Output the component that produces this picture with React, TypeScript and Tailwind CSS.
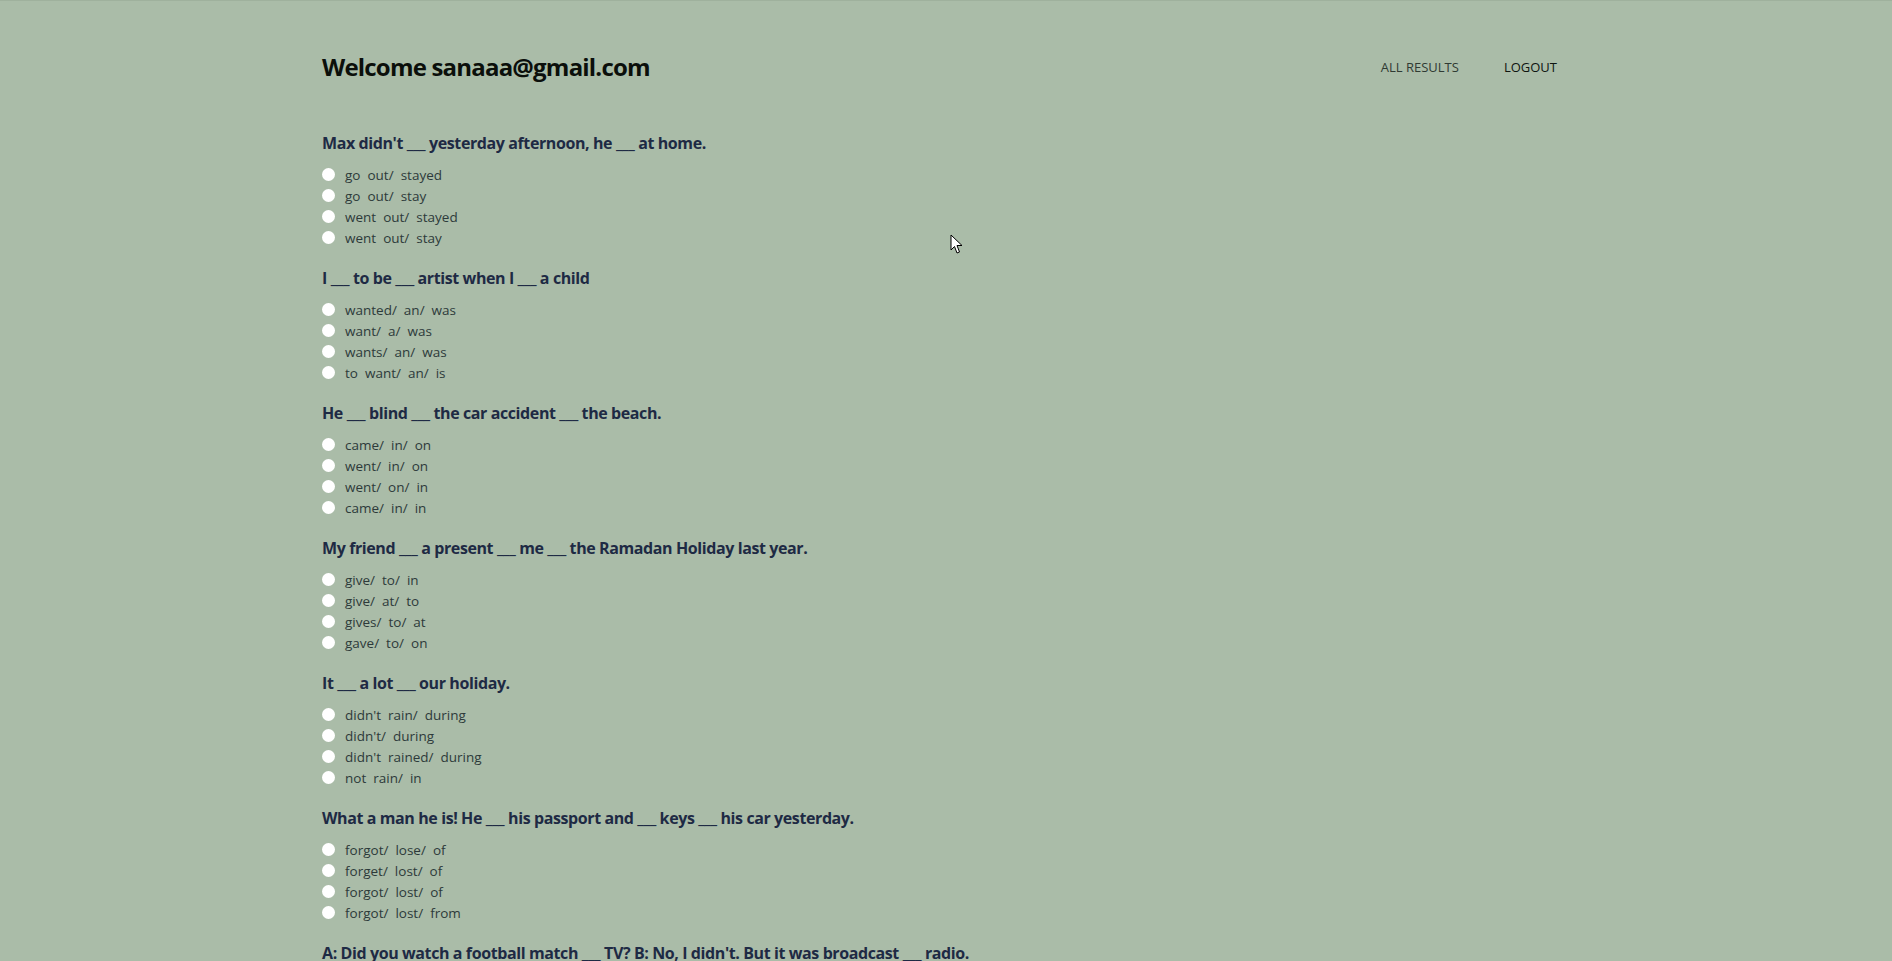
import React from "react";

const questions = [
    {
        title: "Max didn't ___ yesterday afternoon, he ___ at home.",
        options: ["go  out/  stayed", "go  out/  stay", "went  out/  stayed", "went  out/  stay"],
    },
    {
        title: "I ___ to be ___ artist when I ___ a child",
        options: ["wanted/  an/  was", "want/  a/  was", "wants/  an/  was", "to  want/  an/  is"],
    },
    {
        title: "He ___ blind ___ the car accident ___ the beach.",
        options: ["came/  in/  on", "went/  in/  on", "went/  on/  in", "came/  in/  in"],
    },
    {
        title: "My friend ___ a present ___ me ___ the Ramadan Holiday last year.",
        options: ["give/  to/  in", "give/  at/  to", "gives/  to/  at", "gave/  to/  on"],
    },
    {
        title: "It ___ a lot ___ our holiday.",
        options: ["didn't  rain/  during", "didn't/  during", "didn't  rained/  during", "not  rain/  in"],
    },
    {
        title: "What a man he is! He ___ his passport and ___ keys ___ his car yesterday.",
        options: ["forgot/  lose/  of", "forget/  lost/  of", "forgot/  lost/  of", "forgot/  lost/  from"],
    },
    {
        title: "A: Did you watch a football match ___ TV? B: No, I didn't. But it was broadcast ___ radio.",
        options: ["on/  on", "in/  on", "on/  in", "at/  on"],
    },
];

export default function App() {
    return (
        <div className="relative min-h-screen bg-[#aabca8] border-t border-[#9fb19d] font-['Open_Sans',sans-serif]">
            <div className="max-w-7xl mx-auto px-4 pt-[50px]">
                <header className="flex items-center justify-between">
                    <h1 className="text-2xl font-bold text-[#0b0f0b] tracking-[-0.8px]">Welcome sanaaa@gmail.com</h1>
                    <nav className="flex items-center gap-[45px] pr-[13px] text-[13px] pt-px">
                        <a href="#" className="text-[#2f3a33]">ALL RESULTS</a>
                        <a href="#" className="text-[#0f1410]">LOGOUT</a>
                    </nav>
                </header>

                <form className="mt-[48px]">
                    {questions.map((q, i) => (
                        <div key={i} className="mb-[17px]">
                            <h3 className="text-base font-bold leading-6 tracking-[-0.4px] text-[#1e2a44]">{q.title}</h3>
                            <div className="mt-2.5">
                                {q.options.map((opt, j) => (
                                    <label key={j} className="flex items-center gap-[10px] h-[21px] text-[13.5px] text-[#2d3a3a]">
                                        <input
                                            type="radio"
                                            name={"q" + i}
                                            className="appearance-none w-[13px] h-[13px] rounded-full bg-white -mt-[3px]"
                                        />
                                        <span className="whitespace-pre">{opt}</span>
                                    </label>
                                ))}
                            </div>
                        </div>
                    ))}
                </form>
            </div>

            {/* mouse pointer from the screenshot */}
            <svg className="absolute left-[950px] top-[233px]" width="14" height="21" viewBox="0 0 14 21">
                <path d="M1 1 L1 16 L4.5 12.5 L7 19 L9.5 18 L7 11.5 L12 11.5 Z" fill="#fff" stroke="#000" strokeWidth="1" strokeLinejoin="round" />
            </svg>
        </div>
    );
}
